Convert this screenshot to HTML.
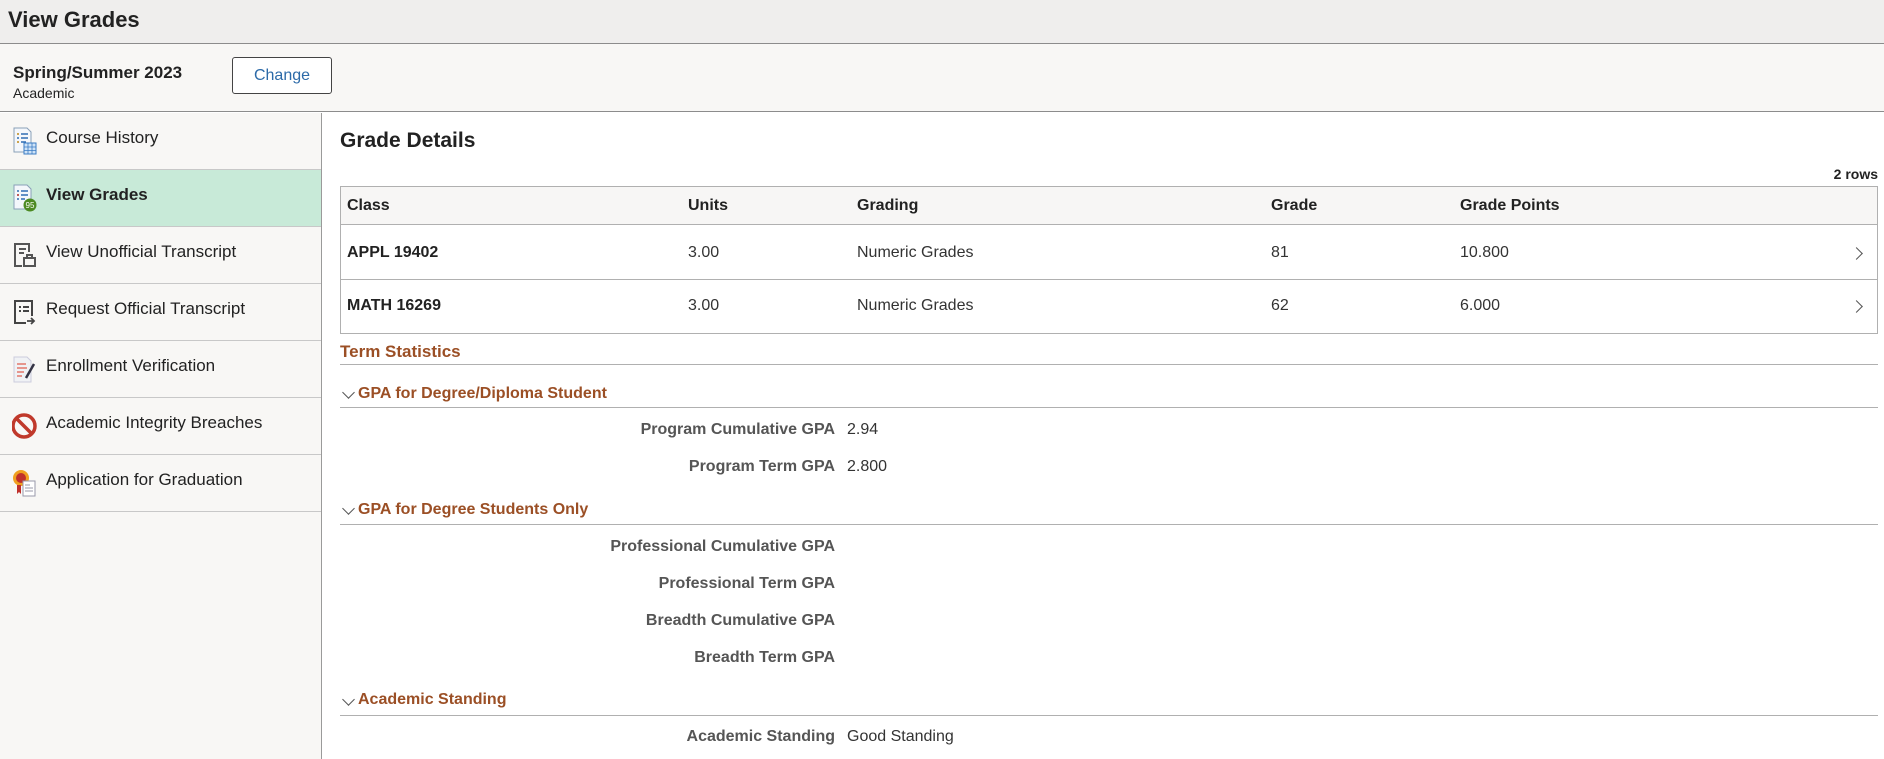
<!DOCTYPE html>
<html><head><meta charset="utf-8"><style>
*{margin:0;padding:0;box-sizing:border-box}
body{width:1884px;height:759px;overflow:hidden;font-family:"Liberation Sans",Arial,sans-serif;background:#fff;position:relative;color:#222}
.a{position:absolute;white-space:nowrap}
#hdr{left:0;top:0;width:1884px;height:44px;background:#efeeed;border-bottom:1px solid #8c8c8c}
#sub{left:0;top:44px;width:1884px;height:68px;background:#f8f7f5;border-bottom:1px solid #8c8c8c}
#side{left:0;top:113px;width:322px;height:646px;background:#f8f7f5;border-right:1px solid #9a9a9a}
.item{position:absolute;left:0;width:321px;height:57px;border-bottom:1px solid #c8c8c8;font-size:17px;color:#222}
.item span{position:absolute;left:46px;top:15px}
.item svg{position:absolute;left:12px;top:13px}
.th{font-weight:bold;font-size:16px;color:#222}
.td{font-size:16px;color:#333}
.sec{font-weight:bold;font-size:16px;color:#9b4f25}
.line{position:absolute;left:340px;width:1538px;height:1px;background:#b0b0b0}
.lbl{font-weight:bold;font-size:16px;color:#555;right:1049px}
.val{font-size:16px;color:#333;left:847px}
.chev{position:absolute;width:9px;height:9px;border-right:1.5px solid #555;border-bottom:1.5px solid #555;transform:rotate(45deg)}
.rch{position:absolute;width:9px;height:9px;border-right:1.5px solid #555;border-top:1.5px solid #555;transform:rotate(45deg)}
</style></head><body>
<div id="hdr" class="a"></div>
<div class="a" style="left:8px;top:7px;font-size:22px;font-weight:bold;color:#222">View Grades</div>
<div id="sub" class="a"></div>
<div class="a" style="left:13px;top:63px;font-size:17px;font-weight:bold;color:#222">Spring/Summer 2023</div>
<div class="a" style="left:13px;top:85px;font-size:14px;color:#222">Academic</div>
<div class="a" style="left:232px;top:57px;width:100px;height:37px;border:1px solid #444;border-radius:3px;background:#fff;color:#2c6aa8;font-size:16px;text-align:center;line-height:35px">Change</div>

<div id="side" class="a">
<div class="item" style="top:0"><svg width="26" height="30" viewBox="0 0 26 30"><path d="M2 2h13l4 4v20H2z" fill="#f4f7fb" stroke="#8aa0b8"/><path d="M5 8h2M9 8h7M5 12h2M9 12h7M5 16h2M9 16h5" stroke="#2f6db3" stroke-width="1.5"/><path d="M5 8h2M5 16h2" stroke="#e0a020" stroke-width="1.5"/><rect x="12" y="17" width="12" height="11" fill="#cfe3f7" stroke="#3b7cc4"/><path d="M12 21h12M12 24.5h12M16 17v11M20 17v11" stroke="#3b7cc4" stroke-width=".8"/></svg><span>Course History</span></div>
<div class="item" style="top:57px;background:#c8ead8"><svg width="26" height="30" viewBox="0 0 26 30"><path d="M2 2h13l4 4v20H2z" fill="#f4f7fb" stroke="#8aa0b8"/><path d="M5 8h2M9 8h7M5 12h2M9 12h7M5 16h2M9 16h4" stroke="#2f6db3" stroke-width="1.5"/><path d="M5 12h2" stroke="#d04030" stroke-width="1.5"/><circle cx="18" cy="22" r="6.5" fill="#4c8a22"/><text x="18" y="25" font-size="8" fill="#fff" text-anchor="middle" font-family="Liberation Sans">95</text></svg><span style="font-weight:bold">View Grades</span></div>
<div class="item" style="top:114px"><svg width="26" height="30" viewBox="0 0 26 30"><path d="M10 26H3V4h14v8" fill="none" stroke="#555" stroke-width="2"/><path d="M7 9h7M7 13h5" stroke="#555" stroke-width="2"/><rect x="12" y="18" width="11" height="8" fill="none" stroke="#555" stroke-width="2"/><path d="M15 18v-3h5v3" fill="none" stroke="#555" stroke-width="2"/></svg><span>View Unofficial Transcript</span></div>
<div class="item" style="top:171px"><svg width="26" height="30" viewBox="0 0 26 30"><path d="M14 26H3V4h17v15" fill="none" stroke="#444" stroke-width="2"/><path d="M7 10h2M11 10h6M7 14h2M11 14h6" stroke="#444" stroke-width="2"/><path d="M15 24h7M19 21l3 3-3 3" fill="none" stroke="#444" stroke-width="1.8"/></svg><span>Request Official Transcript</span></div>
<div class="item" style="top:228px"><svg width="26" height="30" viewBox="0 0 26 30"><path d="M2 3h13l4 4v21H2z" fill="#f0f2f5" stroke="#ccd"/><path d="M5 10h9M5 14h10M5 18h7M5 22h5" stroke="#e06050" stroke-width="1.2"/><path d="M22 10l-8 14" stroke="#334" stroke-width="2.5"/></svg><span>Enrollment Verification</span></div>
<div class="item" style="top:285px"><svg width="28" height="30" viewBox="0 0 28 30"><circle cx="12" cy="15" r="11" fill="none" stroke="#c0392b" stroke-width="3.5"/><path d="M5 8l14 14" stroke="#c0392b" stroke-width="3.5"/></svg><span>Academic Integrity Breaches</span></div>
<div class="item" style="top:342px"><svg width="26" height="30" viewBox="0 0 26 30"><circle cx="9" cy="10" r="8" fill="#f0a020"/><circle cx="9" cy="10" r="5" fill="#c0302b"/><path d="M5 17v9l2-2 2 2v-9" fill="#c0302b"/><rect x="11" y="13" width="12" height="15" fill="#fff" stroke="#99a"/><path d="M13 17h5M13 20h8M13 23h8" stroke="#99a"/></svg><span>Application for Graduation</span></div>
</div>

<div class="a" style="left:340px;top:129px;font-size:21px;font-weight:bold;color:#222">Grade Details</div>
<div class="a" style="right:6px;top:166px;font-size:14px;font-weight:bold;color:#222">2 rows</div>
<div class="a" style="left:340px;top:186px;width:1538px;height:148px;border:1px solid #b0b0b0"></div>
<div class="a" style="left:341px;top:187px;width:1536px;height:38px;background:#f7f6f5;border-bottom:1px solid #b0b0b0"></div>
<div class="a" style="left:341px;top:279px;width:1536px;height:1px;background:#b0b0b0"></div>
<div class="a th" style="left:347px;top:197px">Class</div>
<div class="a th" style="left:688px;top:197px">Units</div>
<div class="a th" style="left:857px;top:197px">Grading</div>
<div class="a th" style="left:1271px;top:197px">Grade</div>
<div class="a th" style="left:1460px;top:197px">Grade Points</div>
<div class="a th" style="left:347px;top:244px">APPL 19402</div>
<div class="a td" style="left:688px;top:244px">3.00</div>
<div class="a td" style="left:857px;top:244px">Numeric Grades</div>
<div class="a td" style="left:1271px;top:244px">81</div>
<div class="a td" style="left:1460px;top:244px">10.800</div>
<div class="rch" style="left:1852px;top:249px"></div>
<div class="a th" style="left:347px;top:297px">MATH 16269</div>
<div class="a td" style="left:688px;top:297px">3.00</div>
<div class="a td" style="left:857px;top:297px">Numeric Grades</div>
<div class="a td" style="left:1271px;top:297px">62</div>
<div class="a td" style="left:1460px;top:297px">6.000</div>
<div class="rch" style="left:1852px;top:302px"></div>

<div class="a sec" style="left:340px;top:342px;font-size:17px">Term Statistics</div>
<div class="line" style="top:364px"></div>
<div class="chev" style="left:344px;top:388px"></div>
<div class="a sec" style="left:358px;top:385px">GPA for Degree/Diploma Student</div>
<div class="line" style="top:407px"></div>
<div class="a lbl" style="top:421px">Program Cumulative GPA</div><div class="a val" style="top:421px">2.94</div>
<div class="a lbl" style="top:458px">Program Term GPA</div><div class="a val" style="top:458px">2.800</div>
<div class="chev" style="left:344px;top:504px"></div>
<div class="a sec" style="left:358px;top:501px">GPA for Degree Students Only</div>
<div class="line" style="top:524px"></div>
<div class="a lbl" style="top:538px">Professional Cumulative GPA</div>
<div class="a lbl" style="top:575px">Professional Term GPA</div>
<div class="a lbl" style="top:612px">Breadth Cumulative GPA</div>
<div class="a lbl" style="top:649px">Breadth Term GPA</div>
<div class="chev" style="left:344px;top:695px"></div>
<div class="a sec" style="left:358px;top:691px">Academic Standing</div>
<div class="line" style="top:715px"></div>
<div class="a lbl" style="top:728px">Academic Standing</div><div class="a val" style="top:728px">Good Standing</div>
</body></html>
